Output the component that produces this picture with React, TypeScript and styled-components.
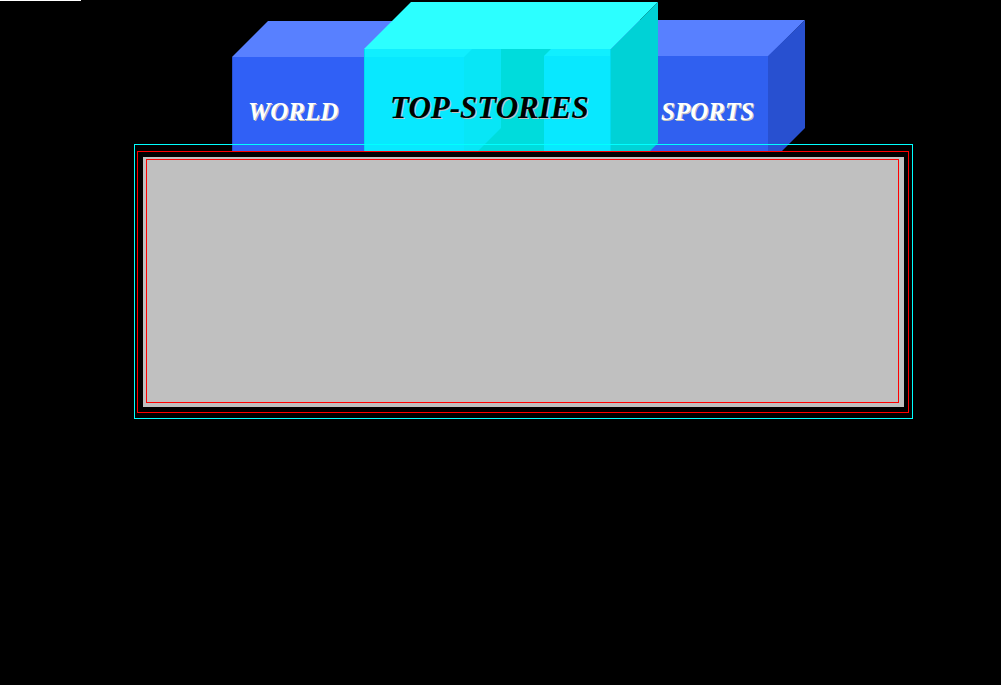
import React from 'react';
import styled, { createGlobalStyle } from 'styled-components';

const GlobalStyle = createGlobalStyle`
  body {
    margin: 0;
    background: #000;
    font-family: 'Liberation Serif', 'Times New Roman', serif;
  }
`;

const Page = styled.main`
  min-height: 100vh;
`;

const TopRule = styled.div`
  width: 81px;
  height: 1px;
  background: #fff;
`;

const Stage = styled.div`
  display: flex;
  flex-direction: column;
  padding: 0 88px 0 134px;
`;

const CubeNav = styled.nav`
  display: grid;
  align-self: center;
  width: 573px;
  height: 150px;
  margin-right: 10px;

  & > * {
    grid-area: 1 / 1;
  }
`;

const Cubes = styled.svg`
  display: block;
  width: 573px;
  height: 150px;
`;

const Labels = styled.div`
  z-index: 1;
  display: grid;
  grid-template-columns: 132px 1fr 148px;
  align-items: center;
  padding-top: 63px;
`;

const Label = styled.a<{ $active?: boolean }>`
  padding-top: ${({ $active }) => ($active ? 0 : 9)}px;
  padding-left: ${({ $active }) => ($active ? 26 : 16)}px;
  font-size: ${({ $active }) => ($active ? 31 : 25)}px;
  line-height: 32px;
  font-weight: bold;
  font-style: italic;
  text-decoration: none;
  white-space: nowrap;
  color: ${({ $active }) => ($active ? '#000' : '#fff')};
  text-shadow: 1px 1px 0 #c0c0c0;
`;

const SportsLabel = styled(Label)`
  padding-left: 4px;
`;

const OuterFrame = styled.section`
  z-index: 1;
  margin-top: -7px;
  padding: 6px 3px 5px 2px;
  border: 1px solid #0ff;
`;

const RedFrame = styled.div`
  padding: 5px 4px 5px 5px;
  border: 1px solid #f00;
  background: #000;
`;

const Board = styled.div`
  padding: 2px 5px 4px 3px;
  background: #c0c0c0;
`;

const Story = styled.article`
  box-sizing: border-box;
  min-height: 244px;
  border: 1px solid #f00;
`;

export default function App() {
  return (
    <Page>
      <GlobalStyle />
      <TopRule />
      <Stage>
        <CubeNav aria-label="Sections">
          <Cubes viewBox="232 1 573 150" aria-hidden="true">
            <path d="M232 57L268 21H501V57Z" fill="#5880ff" />
            <path d="M232 57H464V151H232Z" fill="#3060f6" />
            <path d="M232.5 57V151" stroke="#2850d0" />
            <path d="M544 56L580 20H805L769 56Z" fill="#5880ff" />
            <path d="M544 56H769V151H544Z" fill="#3060f0" />
            <path d="M768 56L805 20V128L782 151H768Z" fill="#2850d0" />

            <path d="M364 49L411 2H658L611 49Z" fill="#2cffff" />
            <path d="M364 49H611V151H364Z" fill="#00dcdc" />
            <path d="M364 49H501V128L478 151H364Z" fill="#08e6f6" />
            <path d="M364 57H464V151H364Z" fill="#08e8ff" />
            <path d="M364 49H472L464 57H364Z" fill="#10efff" />
            <path d="M544 56L551 49H611V56Z" fill="#10efff" />
            <path d="M544 56H611V151H544Z" fill="#08e8ff" />
            <path d="M611 49L658 2V143L650 151H611Z" fill="#00d2d6" />
            <path d="M364.5 49V151M610.5 49V151" stroke="#00dcf0" />
          </Cubes>
          <Labels>
            <Label href="#world">WORLD</Label>
            <Label href="#top-stories" $active>TOP-STORIES</Label>
            <SportsLabel href="#sports">SPORTS</SportsLabel>
          </Labels>
        </CubeNav>
        <OuterFrame>
          <RedFrame>
            <Board>
              <Story />
            </Board>
          </RedFrame>
        </OuterFrame>
      </Stage>
    </Page>
  );
}
